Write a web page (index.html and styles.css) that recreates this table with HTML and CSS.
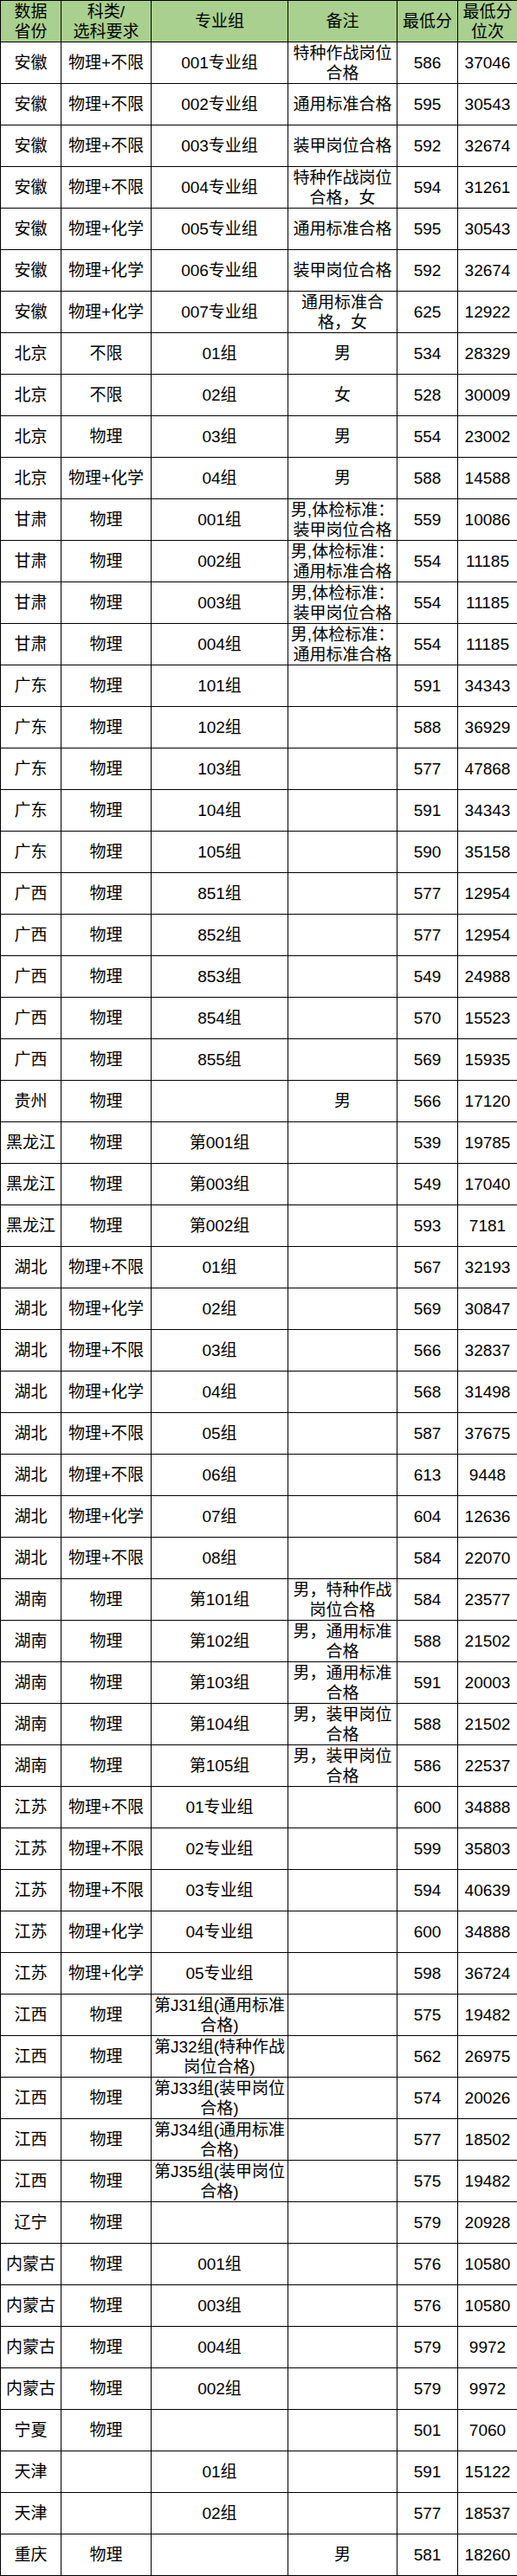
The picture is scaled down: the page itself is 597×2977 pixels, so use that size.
FILE: index.html
```html
<!DOCTYPE html>
<html lang="zh-CN">
<head>
<meta charset="utf-8">
<title>录取分数</title>
<link rel="stylesheet" href="styles.css">
</head>
<body>
<table class="score-table">
<colgroup>
<col class="c-prov"><col class="c-subj"><col class="c-group"><col class="c-note"><col class="c-score"><col class="c-rank">
</colgroup>
<thead>
<tr><th>数据<br>省份</th><th>科类/<br>选科要求</th><th>专业组</th><th>备注</th><th>最低分</th><th>最低分<br>位次</th></tr>
</thead>
<tbody>
<tr><td>安徽</td><td>物理+不限</td><td>001专业组</td><td>特种作战岗位<br>合格</td><td>586</td><td>37046</td></tr>
<tr><td>安徽</td><td>物理+不限</td><td>002专业组</td><td>通用标准合格</td><td>595</td><td>30543</td></tr>
<tr><td>安徽</td><td>物理+不限</td><td>003专业组</td><td>装甲岗位合格</td><td>592</td><td>32674</td></tr>
<tr><td>安徽</td><td>物理+不限</td><td>004专业组</td><td>特种作战岗位<br>合格，女</td><td>594</td><td>31261</td></tr>
<tr><td>安徽</td><td>物理+化学</td><td>005专业组</td><td>通用标准合格</td><td>595</td><td>30543</td></tr>
<tr><td>安徽</td><td>物理+化学</td><td>006专业组</td><td>装甲岗位合格</td><td>592</td><td>32674</td></tr>
<tr><td>安徽</td><td>物理+化学</td><td>007专业组</td><td>通用标准合<br>格，女</td><td>625</td><td>12922</td></tr>
<tr><td>北京</td><td>不限</td><td>01组</td><td>男</td><td>534</td><td>28329</td></tr>
<tr><td>北京</td><td>不限</td><td>02组</td><td>女</td><td>528</td><td>30009</td></tr>
<tr><td>北京</td><td>物理</td><td>03组</td><td>男</td><td>554</td><td>23002</td></tr>
<tr><td>北京</td><td>物理+化学</td><td>04组</td><td>男</td><td>588</td><td>14588</td></tr>
<tr><td>甘肃</td><td>物理</td><td>001组</td><td>男,体检标准：<br>装甲岗位合格</td><td>559</td><td>10086</td></tr>
<tr><td>甘肃</td><td>物理</td><td>002组</td><td>男,体检标准：<br>通用标准合格</td><td>554</td><td>11185</td></tr>
<tr><td>甘肃</td><td>物理</td><td>003组</td><td>男,体检标准：<br>装甲岗位合格</td><td>554</td><td>11185</td></tr>
<tr><td>甘肃</td><td>物理</td><td>004组</td><td>男,体检标准：<br>通用标准合格</td><td>554</td><td>11185</td></tr>
<tr><td>广东</td><td>物理</td><td>101组</td><td></td><td>591</td><td>34343</td></tr>
<tr><td>广东</td><td>物理</td><td>102组</td><td></td><td>588</td><td>36929</td></tr>
<tr><td>广东</td><td>物理</td><td>103组</td><td></td><td>577</td><td>47868</td></tr>
<tr><td>广东</td><td>物理</td><td>104组</td><td></td><td>591</td><td>34343</td></tr>
<tr><td>广东</td><td>物理</td><td>105组</td><td></td><td>590</td><td>35158</td></tr>
<tr><td>广西</td><td>物理</td><td>851组</td><td></td><td>577</td><td>12954</td></tr>
<tr><td>广西</td><td>物理</td><td>852组</td><td></td><td>577</td><td>12954</td></tr>
<tr><td>广西</td><td>物理</td><td>853组</td><td></td><td>549</td><td>24988</td></tr>
<tr><td>广西</td><td>物理</td><td>854组</td><td></td><td>570</td><td>15523</td></tr>
<tr><td>广西</td><td>物理</td><td>855组</td><td></td><td>569</td><td>15935</td></tr>
<tr><td>贵州</td><td>物理</td><td></td><td>男</td><td>566</td><td>17120</td></tr>
<tr><td>黑龙江</td><td>物理</td><td>第001组</td><td></td><td>539</td><td>19785</td></tr>
<tr><td>黑龙江</td><td>物理</td><td>第003组</td><td></td><td>549</td><td>17040</td></tr>
<tr><td>黑龙江</td><td>物理</td><td>第002组</td><td></td><td>593</td><td>7181</td></tr>
<tr><td>湖北</td><td>物理+不限</td><td>01组</td><td></td><td>567</td><td>32193</td></tr>
<tr><td>湖北</td><td>物理+化学</td><td>02组</td><td></td><td>569</td><td>30847</td></tr>
<tr><td>湖北</td><td>物理+不限</td><td>03组</td><td></td><td>566</td><td>32837</td></tr>
<tr><td>湖北</td><td>物理+化学</td><td>04组</td><td></td><td>568</td><td>31498</td></tr>
<tr><td>湖北</td><td>物理+不限</td><td>05组</td><td></td><td>587</td><td>37675</td></tr>
<tr><td>湖北</td><td>物理+不限</td><td>06组</td><td></td><td>613</td><td>9448</td></tr>
<tr><td>湖北</td><td>物理+化学</td><td>07组</td><td></td><td>604</td><td>12636</td></tr>
<tr><td>湖北</td><td>物理+不限</td><td>08组</td><td></td><td>584</td><td>22070</td></tr>
<tr><td>湖南</td><td>物理</td><td>第101组</td><td>男，特种作战<br>岗位合格</td><td>584</td><td>23577</td></tr>
<tr><td>湖南</td><td>物理</td><td>第102组</td><td>男，通用标准<br>合格</td><td>588</td><td>21502</td></tr>
<tr><td>湖南</td><td>物理</td><td>第103组</td><td>男，通用标准<br>合格</td><td>591</td><td>20003</td></tr>
<tr><td>湖南</td><td>物理</td><td>第104组</td><td>男，装甲岗位<br>合格</td><td>588</td><td>21502</td></tr>
<tr><td>湖南</td><td>物理</td><td>第105组</td><td>男，装甲岗位<br>合格</td><td>586</td><td>22537</td></tr>
<tr><td>江苏</td><td>物理+不限</td><td>01专业组</td><td></td><td>600</td><td>34888</td></tr>
<tr><td>江苏</td><td>物理+不限</td><td>02专业组</td><td></td><td>599</td><td>35803</td></tr>
<tr><td>江苏</td><td>物理+不限</td><td>03专业组</td><td></td><td>594</td><td>40639</td></tr>
<tr><td>江苏</td><td>物理+化学</td><td>04专业组</td><td></td><td>600</td><td>34888</td></tr>
<tr><td>江苏</td><td>物理+化学</td><td>05专业组</td><td></td><td>598</td><td>36724</td></tr>
<tr><td>江西</td><td>物理</td><td>第J31组(通用标准<br>合格)</td><td></td><td>575</td><td>19482</td></tr>
<tr><td>江西</td><td>物理</td><td>第J32组(特种作战<br>岗位合格)</td><td></td><td>562</td><td>26975</td></tr>
<tr><td>江西</td><td>物理</td><td>第J33组(装甲岗位<br>合格)</td><td></td><td>574</td><td>20026</td></tr>
<tr><td>江西</td><td>物理</td><td>第J34组(通用标准<br>合格)</td><td></td><td>577</td><td>18502</td></tr>
<tr><td>江西</td><td>物理</td><td>第J35组(装甲岗位<br>合格)</td><td></td><td>575</td><td>19482</td></tr>
<tr><td>辽宁</td><td>物理</td><td></td><td></td><td>579</td><td>20928</td></tr>
<tr><td>内蒙古</td><td>物理</td><td>001组</td><td></td><td>576</td><td>10580</td></tr>
<tr><td>内蒙古</td><td>物理</td><td>003组</td><td></td><td>576</td><td>10580</td></tr>
<tr><td>内蒙古</td><td>物理</td><td>004组</td><td></td><td>579</td><td>9972</td></tr>
<tr><td>内蒙古</td><td>物理</td><td>002组</td><td></td><td>579</td><td>9972</td></tr>
<tr><td>宁夏</td><td>物理</td><td></td><td></td><td>501</td><td>7060</td></tr>
<tr><td>天津</td><td></td><td>01组</td><td></td><td>591</td><td>15122</td></tr>
<tr><td>天津</td><td></td><td>02组</td><td></td><td>577</td><td>18537</td></tr>
<tr><td>重庆</td><td>物理</td><td></td><td>男</td><td>581</td><td>18260</td></tr>
</tbody>
</table>
</body>
</html>
```

FILE: styles.css
```css
html, body {
  margin: 0;
  padding: 0;
  background: #ffffff;
}

.score-table {
  border-collapse: collapse;
  table-layout: fixed;
  width: 597px;
  font-family: "Liberation Sans", "Noto Sans CJK SC", sans-serif;
  font-size: 19px;
  color: #000000;
}

.c-prov { width: 70px; }
.c-subj { width: 104px; }
.c-group { width: 158px; }
.c-note { width: 126px; }
.c-score { width: 70px; }
.c-rank { width: 69px; }

.score-table tr {
  height: 48px;
}

.score-table th,
.score-table td {
  border: 1px solid #000000;
  padding: 0 1px;
  text-align: center;
  vertical-align: middle;
  line-height: 23px;
  font-weight: normal;
  white-space: nowrap;
  overflow: hidden;
}

.score-table th {
  background: #a9d08e;
}
```
